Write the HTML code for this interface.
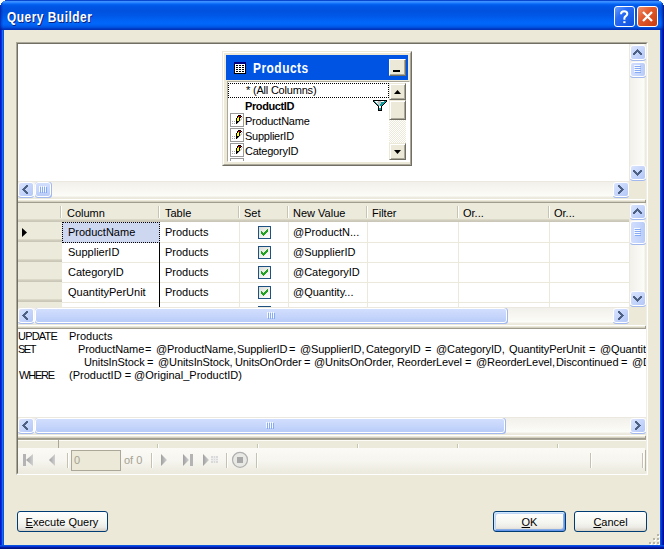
<!DOCTYPE html><html><head><meta charset="utf-8"><style>
*{margin:0;padding:0;box-sizing:border-box}
html,body{width:664px;height:549px;overflow:hidden;background:#fff}
body{position:relative;font-family:"Liberation Sans",sans-serif;font-size:11px;color:#000}
.a{position:absolute}
.t{position:absolute;white-space:pre;font-size:11px;line-height:13px}
.sb,.thv,.thh{position:absolute;border-radius:3px;background:linear-gradient(180deg,transparent 0,transparent calc(100% - 2px),#a3b9ee calc(100% - 2px))}
.thh{background:#a3b9ee}
.sb{width:16px;height:16px}
.sb>svg{position:absolute;left:0;top:0}
.sb::before,.thv::before,.thh::before{content:"";position:absolute;left:0;top:0;right:0;bottom:1px;border:1px solid #fff;border-radius:3px;background:linear-gradient(135deg,#dae4fd 0%,#c8d7fb 45%,#b3c7f7 100%)}
.thh::before{right:1px}
.thv{width:16px}
.thh{height:16px}
.thv::before{background:linear-gradient(90deg,#d2defd,#c4d4fb 60%,#b8ccf8)}
.thh::before{background:linear-gradient(180deg,#d2defd,#c4d4fb 60%,#b8ccf8)}
.sb>svg,.thv>svg,.thh>svg{z-index:1}
.trkv{position:absolute;width:17px;background:linear-gradient(90deg,#ebe9df 0,#ebe9df 1px,#f2f0ea 1px,#fcfcf8 15px,#edebe1 16px,#edebe1 17px)}
.trkh{position:absolute;height:17px;background:linear-gradient(180deg,#ebe9df 0,#ebe9df 1px,#f2f0ea 1px,#fcfcf8 15px,#edebe1 16px,#edebe1 17px)}
.hdr{position:absolute;background:linear-gradient(180deg,#ebeadb 0,#ebeadb calc(100% - 3px),#e2decd calc(100% - 3px),#d6d2c2 calc(100% - 2px),#cbc7b8 calc(100% - 1px))}
.rh{position:absolute;left:18px;width:44px;height:20px;background:linear-gradient(180deg,#ebeadb 0,#ebeadb 17px,#e2decd 17px,#d6d2c2 18px,#cbc7b8 19px)}
.hsep{position:absolute;width:2px;height:12px;border-left:1px solid #c7c5b2;border-right:1px solid #fff}
.chk{position:absolute;width:13px;height:13px;border:1px solid #1c5180;background:linear-gradient(135deg,#dcdcd7,#fff)}
.btn{position:absolute;height:21px;border:1px solid #003c74;border-radius:3px;background:linear-gradient(180deg,#fff 0%,#f4f4ef 60%,#ecebe6 80%,#d6d0c5 100%);text-align:center;line-height:20px}
.tsep{position:absolute;width:2px;height:15px;border-left:1px solid #c5c2b2;border-right:1px solid #fff}
.cls{position:absolute;width:17px;background:#ece9d8;border-top:1px solid #ece9d8;border-left:1px solid #ece9d8;border-right:1px solid #716f64;border-bottom:1px solid #716f64;box-shadow:inset 1px 1px 0 #fff,inset -1px -1px 0 #aca899}
</style></head><body>
<div class="a" style="left:0;top:0;width:664px;height:549px;background:#0831d9;overflow:hidden">
<div class="a" style="left:0;top:0;width:664px;height:30px;background:linear-gradient(180deg,#0a47d0 0px,#0a47d0 1px,#3f8fff 1px,#3a91ff 2px,#1c7bff 3px,#0a68f5 4px,#005ceb 5px,#0055e5 7px,#0051de 11px,#0058e8 16px,#0064f7 21px,#0067fa 24px,#005dee 26px,#0049d6 28px,#0033ba 29px,#0033ba 30px)"></div>
<div class="a" style="left:0px;top:30px;width:1px;height:519px;background:#0019cf"></div>
<div class="a" style="left:1px;top:30px;width:1px;height:519px;background:#0831d9"></div>
<div class="a" style="left:2px;top:30px;width:1px;height:519px;background:#166aee"></div>
<div class="a" style="left:3px;top:30px;width:1px;height:519px;background:#0855dd"></div>
<div class="a" style="left:660px;top:30px;width:1px;height:519px;background:#0855dd"></div>
<div class="a" style="left:661px;top:30px;width:1px;height:519px;background:#0831d9"></div>
<div class="a" style="left:662px;top:30px;width:1px;height:519px;background:#0019cf"></div>
<div class="a" style="left:663px;top:30px;width:1px;height:519px;background:#001080"></div>
<div class="a" style="left:0px;top:545px;width:664px;height:1px;background:#0855dd"></div>
<div class="a" style="left:0px;top:546px;width:664px;height:1px;background:#0831d9"></div>
<div class="a" style="left:0px;top:547px;width:664px;height:1px;background:#001ea0"></div>
<div class="a" style="left:0px;top:548px;width:664px;height:1px;background:#001080"></div>
<div class="a" style="left:4px;top:30px;width:656px;height:515px;background:#ece9d8"></div>
<div class="a" style="left:0px;top:0px;width:1px;height:30px;background:rgba(0,16,140,0.55)"></div>
<div class="a" style="left:1px;top:0px;width:1px;height:30px;background:rgba(0,20,160,0.3)"></div>
<div class="a" style="left:2px;top:0px;width:1px;height:30px;background:rgba(0,20,160,0.12)"></div>
<div class="a" style="left:663px;top:0px;width:1px;height:30px;background:rgba(0,10,100,0.7)"></div>
<div class="a" style="left:662px;top:0px;width:1px;height:30px;background:rgba(0,20,150,0.45)"></div>
<div class="a" style="left:661px;top:0px;width:1px;height:30px;background:rgba(0,30,180,0.2)"></div>
<div class="a" style="left:0px;top:0px;width:5px;height:1px;background:#fff"></div>
<div class="a" style="left:659px;top:0px;width:5px;height:1px;background:#fff"></div>
<div class="a" style="left:0px;top:1px;width:3px;height:1px;background:#fff"></div>
<div class="a" style="left:661px;top:1px;width:3px;height:1px;background:#fff"></div>
<div class="a" style="left:0px;top:2px;width:2px;height:1px;background:#fff"></div>
<div class="a" style="left:662px;top:2px;width:2px;height:1px;background:#fff"></div>
<div class="a" style="left:0px;top:3px;width:1px;height:1px;background:#fff"></div>
<div class="a" style="left:663px;top:3px;width:1px;height:1px;background:#fff"></div>
<div class="a" style="left:0px;top:4px;width:1px;height:1px;background:#fff"></div>
<div class="a" style="left:663px;top:4px;width:1px;height:1px;background:#fff"></div>
</div>
<div class="t" style="left:7px;top:9px;font-size:14px;line-height:16px;font-weight:bold;color:#fff;text-shadow:1px 1px 0 #0a1e7a;letter-spacing:0.6px;transform:scaleX(0.85);transform-origin:0 0">Query Builder</div>
<div class="a" style="left:614px;top:6px;width:21px;height:21px;border:1px solid #fff;border-radius:3px;background:linear-gradient(135deg,#6aa0ff 0%,#2a6cf5 35%,#0b4fdd 100%)"><svg class="a" style="left:0;top:0" width="19" height="19" viewBox="0 0 19 19"><path d="M6 7.2 C6 4.9 7.6 4.3 9.2 4.3 C11 4.3 12.3 5.3 12.3 7 C12.3 8.8 9.4 9.4 9.4 11 L9.4 12.8" fill="none" stroke="#fff" stroke-width="2"/><rect x="8.3" y="14.2" width="2.2" height="1.9" fill="#fff"/></svg></div>
<div class="a" style="left:637px;top:6px;width:21px;height:21px;border:1px solid #fff;border-radius:3px;background:linear-gradient(135deg,#f0906a 0%,#e25a2c 40%,#c83c10 100%)"><svg class="a" style="left:0;top:0" width="19" height="19" viewBox="0 0 19 19"><path d="M5 5 L14 14 M14 5 L5 14" stroke="#fff" stroke-width="2.3"/></svg></div>
<div class="a" style="left:16px;top:42px;width:632px;height:433px;background:#ece9d8;border-top:1px solid #aca899;border-left:1px solid #aca899;border-right:1px solid #fff;border-bottom:1px solid #fff"></div>
<div class="a" style="left:17px;top:43px;width:630px;height:431px;border-top:1px solid #716f64;border-left:1px solid #716f64;border-right:1px solid #f1efe2;border-bottom:1px solid #f1efe2"></div>
<div class="a" style="left:18px;top:44px;width:611px;height:137px;background:#fff"></div>
<div class="trkv" style="left:629px;top:44px;height:137px"></div>
<div class="sb" style="left:630px;top:45px"></div>
<svg class="a" style="left:630px;top:45px" width="12" height="10" shape-rendering="crispEdges"><rect x="7" y="4" width="1" height="1" fill="#4d6185"/><rect x="6" y="5" width="3" height="1" fill="#4d6185"/><rect x="5" y="6" width="5" height="1" fill="#4d6185"/><rect x="4" y="7" width="3" height="1" fill="#4d6185"/><rect x="8" y="7" width="3" height="1" fill="#4d6185"/><rect x="3" y="8" width="3" height="1" fill="#4d6185"/><rect x="9" y="8" width="3" height="1" fill="#4d6185"/><rect x="3" y="9" width="2" height="1" fill="#4d6185"/><rect x="10" y="9" width="2" height="1" fill="#4d6185"/></svg>
<div class="thv" style="left:630px;top:62px;height:16px"></div>
<svg class="a" style="left:630px;top:62px" width="11" height="11" shape-rendering="crispEdges"><rect x="4" y="3" width="6" height="1" fill="#f6f9fe"/><rect x="5" y="4" width="6" height="1" fill="#86aaf6"/><rect x="4" y="5" width="6" height="1" fill="#f6f9fe"/><rect x="5" y="6" width="6" height="1" fill="#86aaf6"/><rect x="4" y="7" width="6" height="1" fill="#f6f9fe"/><rect x="5" y="8" width="6" height="1" fill="#86aaf6"/><rect x="4" y="9" width="6" height="1" fill="#f6f9fe"/><rect x="5" y="10" width="6" height="1" fill="#86aaf6"/></svg>
<div class="sb" style="left:630px;top:165px"></div>
<svg class="a" style="left:630px;top:165px" width="12" height="11" shape-rendering="crispEdges"><rect x="3" y="5" width="2" height="1" fill="#4d6185"/><rect x="10" y="5" width="2" height="1" fill="#4d6185"/><rect x="3" y="6" width="3" height="1" fill="#4d6185"/><rect x="9" y="6" width="3" height="1" fill="#4d6185"/><rect x="4" y="7" width="3" height="1" fill="#4d6185"/><rect x="8" y="7" width="3" height="1" fill="#4d6185"/><rect x="5" y="8" width="5" height="1" fill="#4d6185"/><rect x="6" y="9" width="3" height="1" fill="#4d6185"/><rect x="7" y="10" width="1" height="1" fill="#4d6185"/></svg>
<div class="trkh" style="left:18px;top:181px;width:611px"></div>
<div class="sb" style="left:18px;top:182px"></div>
<svg class="a" style="left:18px;top:182px" width="10" height="12" shape-rendering="crispEdges"><rect x="8" y="3" width="2" height="1" fill="#4d6185"/><rect x="7" y="4" width="3" height="1" fill="#4d6185"/><rect x="6" y="5" width="3" height="1" fill="#4d6185"/><rect x="5" y="6" width="3" height="1" fill="#4d6185"/><rect x="4" y="7" width="3" height="1" fill="#4d6185"/><rect x="5" y="8" width="3" height="1" fill="#4d6185"/><rect x="6" y="9" width="3" height="1" fill="#4d6185"/><rect x="7" y="10" width="3" height="1" fill="#4d6185"/><rect x="8" y="11" width="2" height="1" fill="#4d6185"/></svg>
<div class="thh" style="left:35px;top:182px;width:17px"></div>
<svg class="a" style="left:35px;top:182px" width="12" height="11" shape-rendering="crispEdges"><rect x="4" y="4" width="1" height="1" fill="#f6f9fe"/><rect x="6" y="4" width="1" height="1" fill="#f6f9fe"/><rect x="8" y="4" width="1" height="1" fill="#f6f9fe"/><rect x="10" y="4" width="1" height="1" fill="#f6f9fe"/><rect x="4" y="5" width="1" height="1" fill="#f6f9fe"/><rect x="5" y="5" width="1" height="1" fill="#86aaf6"/><rect x="6" y="5" width="1" height="1" fill="#f6f9fe"/><rect x="7" y="5" width="1" height="1" fill="#86aaf6"/><rect x="8" y="5" width="1" height="1" fill="#f6f9fe"/><rect x="9" y="5" width="1" height="1" fill="#86aaf6"/><rect x="10" y="5" width="1" height="1" fill="#f6f9fe"/><rect x="11" y="5" width="1" height="1" fill="#86aaf6"/><rect x="4" y="6" width="1" height="1" fill="#f6f9fe"/><rect x="5" y="6" width="1" height="1" fill="#86aaf6"/><rect x="6" y="6" width="1" height="1" fill="#f6f9fe"/><rect x="7" y="6" width="1" height="1" fill="#86aaf6"/><rect x="8" y="6" width="1" height="1" fill="#f6f9fe"/><rect x="9" y="6" width="1" height="1" fill="#86aaf6"/><rect x="10" y="6" width="1" height="1" fill="#f6f9fe"/><rect x="11" y="6" width="1" height="1" fill="#86aaf6"/><rect x="4" y="7" width="1" height="1" fill="#f6f9fe"/><rect x="5" y="7" width="1" height="1" fill="#86aaf6"/><rect x="6" y="7" width="1" height="1" fill="#f6f9fe"/><rect x="7" y="7" width="1" height="1" fill="#86aaf6"/><rect x="8" y="7" width="1" height="1" fill="#f6f9fe"/><rect x="9" y="7" width="1" height="1" fill="#86aaf6"/><rect x="10" y="7" width="1" height="1" fill="#f6f9fe"/><rect x="11" y="7" width="1" height="1" fill="#86aaf6"/><rect x="4" y="8" width="1" height="1" fill="#f6f9fe"/><rect x="5" y="8" width="1" height="1" fill="#86aaf6"/><rect x="6" y="8" width="1" height="1" fill="#f6f9fe"/><rect x="7" y="8" width="1" height="1" fill="#86aaf6"/><rect x="8" y="8" width="1" height="1" fill="#f6f9fe"/><rect x="9" y="8" width="1" height="1" fill="#86aaf6"/><rect x="10" y="8" width="1" height="1" fill="#f6f9fe"/><rect x="11" y="8" width="1" height="1" fill="#86aaf6"/><rect x="4" y="9" width="1" height="1" fill="#f6f9fe"/><rect x="5" y="9" width="1" height="1" fill="#86aaf6"/><rect x="6" y="9" width="1" height="1" fill="#f6f9fe"/><rect x="7" y="9" width="1" height="1" fill="#86aaf6"/><rect x="8" y="9" width="1" height="1" fill="#f6f9fe"/><rect x="9" y="9" width="1" height="1" fill="#86aaf6"/><rect x="10" y="9" width="1" height="1" fill="#f6f9fe"/><rect x="11" y="9" width="1" height="1" fill="#86aaf6"/><rect x="5" y="10" width="1" height="1" fill="#86aaf6"/><rect x="7" y="10" width="1" height="1" fill="#86aaf6"/><rect x="9" y="10" width="1" height="1" fill="#86aaf6"/><rect x="11" y="10" width="1" height="1" fill="#86aaf6"/></svg>
<div class="sb" style="left:613px;top:182px"></div>
<svg class="a" style="left:613px;top:182px" width="11" height="12" shape-rendering="crispEdges"><rect x="5" y="3" width="2" height="1" fill="#4d6185"/><rect x="5" y="4" width="3" height="1" fill="#4d6185"/><rect x="6" y="5" width="3" height="1" fill="#4d6185"/><rect x="7" y="6" width="3" height="1" fill="#4d6185"/><rect x="8" y="7" width="3" height="1" fill="#4d6185"/><rect x="7" y="8" width="3" height="1" fill="#4d6185"/><rect x="6" y="9" width="3" height="1" fill="#4d6185"/><rect x="5" y="10" width="3" height="1" fill="#4d6185"/><rect x="5" y="11" width="2" height="1" fill="#4d6185"/></svg>
<div class="a" style="left:222px;top:51px;width:190px;height:115px;background:#ece9d8;border-top:1px solid #ece9d8;border-left:1px solid #ece9d8;border-right:1px solid #716f64;border-bottom:1px solid #716f64"></div>
<div class="a" style="left:223px;top:52px;width:188px;height:113px;border-top:1px solid #fff;border-left:1px solid #fff;border-right:1px solid #aca899;border-bottom:1px solid #aca899"></div>
<div class="a" style="left:226px;top:55px;width:182px;height:25px;background:#0054e3"></div>
<svg class="a" style="left:234px;top:62px" width="12" height="12" shape-rendering="crispEdges"><rect x="0" y="0" width="12" height="1" fill="#000080"/><rect x="0" y="1" width="12" height="1" fill="#000080"/><rect x="0" y="2" width="1" height="1" fill="#000"/><rect x="1" y="2" width="10" height="1" fill="#fff"/><rect x="11" y="2" width="1" height="1" fill="#000"/><rect x="0" y="3" width="1" height="1" fill="#000"/><rect x="1" y="3" width="1" height="1" fill="#fff"/><rect x="2" y="3" width="2" height="1" fill="#000"/><rect x="4" y="3" width="1" height="1" fill="#fff"/><rect x="5" y="3" width="2" height="1" fill="#000"/><rect x="7" y="3" width="1" height="1" fill="#fff"/><rect x="8" y="3" width="2" height="1" fill="#000"/><rect x="10" y="3" width="1" height="1" fill="#fff"/><rect x="11" y="3" width="1" height="1" fill="#000"/><rect x="0" y="4" width="1" height="1" fill="#000"/><rect x="1" y="4" width="10" height="1" fill="#fff"/><rect x="11" y="4" width="1" height="1" fill="#000"/><rect x="0" y="5" width="1" height="1" fill="#000"/><rect x="1" y="5" width="1" height="1" fill="#fff"/><rect x="2" y="5" width="2" height="1" fill="#000"/><rect x="4" y="5" width="1" height="1" fill="#fff"/><rect x="5" y="5" width="2" height="1" fill="#000"/><rect x="7" y="5" width="1" height="1" fill="#fff"/><rect x="8" y="5" width="2" height="1" fill="#000"/><rect x="10" y="5" width="1" height="1" fill="#fff"/><rect x="11" y="5" width="1" height="1" fill="#000"/><rect x="0" y="6" width="1" height="1" fill="#000"/><rect x="1" y="6" width="10" height="1" fill="#fff"/><rect x="11" y="6" width="1" height="1" fill="#000"/><rect x="0" y="7" width="1" height="1" fill="#000"/><rect x="1" y="7" width="1" height="1" fill="#fff"/><rect x="2" y="7" width="2" height="1" fill="#000"/><rect x="4" y="7" width="1" height="1" fill="#fff"/><rect x="5" y="7" width="2" height="1" fill="#000"/><rect x="7" y="7" width="1" height="1" fill="#fff"/><rect x="8" y="7" width="2" height="1" fill="#000"/><rect x="10" y="7" width="1" height="1" fill="#fff"/><rect x="11" y="7" width="1" height="1" fill="#000"/><rect x="0" y="8" width="1" height="1" fill="#000"/><rect x="1" y="8" width="10" height="1" fill="#fff"/><rect x="11" y="8" width="1" height="1" fill="#000"/><rect x="0" y="9" width="1" height="1" fill="#000"/><rect x="1" y="9" width="1" height="1" fill="#fff"/><rect x="2" y="9" width="2" height="1" fill="#000"/><rect x="4" y="9" width="1" height="1" fill="#fff"/><rect x="5" y="9" width="2" height="1" fill="#000"/><rect x="7" y="9" width="1" height="1" fill="#fff"/><rect x="8" y="9" width="2" height="1" fill="#000"/><rect x="10" y="9" width="1" height="1" fill="#fff"/><rect x="11" y="9" width="1" height="1" fill="#000"/><rect x="0" y="10" width="1" height="1" fill="#000"/><rect x="1" y="10" width="10" height="1" fill="#fff"/><rect x="11" y="10" width="1" height="1" fill="#000"/><rect x="0" y="11" width="12" height="1" fill="#000"/></svg>
<div class="t" style="left:253px;top:60px;font-size:14px;line-height:16px;font-weight:bold;color:#fff;letter-spacing:0.6px;transform:scaleX(0.85);transform-origin:0 0">Products</div>
<div class="a" style="left:389px;top:59px;width:17px;height:17px;background:#ece9d8;border-top:1px solid #fff;border-left:1px solid #fff;border-right:1px solid #716f64;border-bottom:1px solid #716f64;box-shadow:inset -1px -1px 0 #aca899"></div>
<div class="a" style="left:393px;top:70px;width:7px;height:2px;background:#000"></div>
<div class="a" style="left:227px;top:81px;width:183px;height:81px;background:#fff;border-top:1px solid #aca899;border-left:1px solid #aca899;border-right:1px solid #fff;border-bottom:1px solid #fff"></div>
<div class="a" style="left:228px;top:83px;width:161px;height:15px;border:1px dotted #000"></div>
<div class="t" style="left:246px;top:84px;letter-spacing:-0.2px">* (All Columns)</div>
<div class="t" style="left:245px;top:100px;font-weight:bold;letter-spacing:-0.4px">ProductID</div>
<svg class="a" style="left:373px;top:100px" width="14" height="11" shape-rendering="crispEdges"><rect x="0" y="0" width="14" height="1" fill="#000"/><rect x="0" y="1" width="1" height="1" fill="#000"/><rect x="1" y="1" width="1" height="1" fill="#0a9d9d"/><rect x="2" y="1" width="3" height="1" fill="#ffffff"/><rect x="5" y="1" width="3" height="1" fill="#c4c4c4"/><rect x="8" y="1" width="3" height="1" fill="#ffffff"/><rect x="11" y="1" width="2" height="1" fill="#0a9d9d"/><rect x="13" y="1" width="1" height="1" fill="#000"/><rect x="1" y="2" width="1" height="1" fill="#000"/><rect x="2" y="2" width="1" height="1" fill="#0a9d9d"/><rect x="3" y="2" width="1" height="1" fill="#ffffff"/><rect x="4" y="2" width="4" height="1" fill="#c4c4c4"/><rect x="8" y="2" width="4" height="1" fill="#0a9d9d"/><rect x="12" y="2" width="1" height="1" fill="#000"/><rect x="2" y="3" width="1" height="1" fill="#000"/><rect x="3" y="3" width="1" height="1" fill="#0a9d9d"/><rect x="4" y="3" width="1" height="1" fill="#ffffff"/><rect x="5" y="3" width="3" height="1" fill="#c4c4c4"/><rect x="8" y="3" width="3" height="1" fill="#0a9d9d"/><rect x="11" y="3" width="1" height="1" fill="#000"/><rect x="3" y="4" width="1" height="1" fill="#000"/><rect x="4" y="4" width="1" height="1" fill="#0a9d9d"/><rect x="5" y="4" width="2" height="1" fill="#c4c4c4"/><rect x="7" y="4" width="3" height="1" fill="#0a9d9d"/><rect x="10" y="4" width="1" height="1" fill="#000"/><rect x="4" y="5" width="1" height="1" fill="#000"/><rect x="5" y="5" width="1" height="1" fill="#0a9d9d"/><rect x="6" y="5" width="1" height="1" fill="#c4c4c4"/><rect x="7" y="5" width="2" height="1" fill="#0a9d9d"/><rect x="9" y="5" width="1" height="1" fill="#000"/><rect x="5" y="6" width="1" height="1" fill="#000"/><rect x="6" y="6" width="2" height="1" fill="#ffffff"/><rect x="8" y="6" width="1" height="1" fill="#000"/><rect x="5" y="7" width="1" height="1" fill="#000"/><rect x="6" y="7" width="2" height="1" fill="#ffffff"/><rect x="8" y="7" width="1" height="1" fill="#000"/><rect x="5" y="8" width="1" height="1" fill="#000"/><rect x="6" y="8" width="2" height="1" fill="#0a9d9d"/><rect x="8" y="8" width="1" height="1" fill="#000"/><rect x="5" y="9" width="1" height="1" fill="#000"/><rect x="6" y="9" width="2" height="1" fill="#0a9d9d"/><rect x="8" y="9" width="1" height="1" fill="#000"/><rect x="5" y="10" width="4" height="1" fill="#000"/></svg>
<div class="t" style="left:245px;top:115px;letter-spacing:-0.25px">ProductName</div>
<svg class="a" style="left:230px;top:113px" width="14" height="14" shape-rendering="crispEdges"><rect x="0" y="0" width="14" height="1" fill="#999999"/><rect x="0" y="1" width="1" height="1" fill="#999999"/><rect x="13" y="1" width="1" height="1" fill="#999999"/><rect x="0" y="2" width="1" height="1" fill="#999999"/><rect x="8" y="2" width="3" height="1" fill="#000"/><rect x="13" y="2" width="1" height="1" fill="#999999"/><rect x="0" y="3" width="1" height="1" fill="#999999"/><rect x="7" y="3" width="1" height="1" fill="#000"/><rect x="8" y="3" width="3" height="1" fill="#b00000"/><rect x="11" y="3" width="1" height="1" fill="#000"/><rect x="13" y="3" width="1" height="1" fill="#999999"/><rect x="0" y="4" width="1" height="1" fill="#999999"/><rect x="7" y="4" width="1" height="1" fill="#000"/><rect x="8" y="4" width="1" height="1" fill="#ffff00"/><rect x="9" y="4" width="2" height="1" fill="#000"/><rect x="12" y="4" width="1" height="1" fill="#cfcfcf"/><rect x="13" y="4" width="1" height="1" fill="#999999"/><rect x="0" y="5" width="1" height="1" fill="#999999"/><rect x="6" y="5" width="1" height="1" fill="#000"/><rect x="7" y="5" width="2" height="1" fill="#ffff00"/><rect x="9" y="5" width="1" height="1" fill="#000"/><rect x="11" y="5" width="1" height="1" fill="#cfcfcf"/><rect x="13" y="5" width="1" height="1" fill="#999999"/><rect x="0" y="6" width="1" height="1" fill="#999999"/><rect x="6" y="6" width="1" height="1" fill="#000"/><rect x="7" y="6" width="2" height="1" fill="#ffff00"/><rect x="9" y="6" width="1" height="1" fill="#000"/><rect x="10" y="6" width="2" height="1" fill="#cfcfcf"/><rect x="13" y="6" width="1" height="1" fill="#999999"/><rect x="0" y="7" width="1" height="1" fill="#999999"/><rect x="6" y="7" width="1" height="1" fill="#000"/><rect x="7" y="7" width="2" height="1" fill="#ffff00"/><rect x="9" y="7" width="1" height="1" fill="#000"/><rect x="10" y="7" width="1" height="1" fill="#cfcfcf"/><rect x="13" y="7" width="1" height="1" fill="#999999"/><rect x="0" y="8" width="1" height="1" fill="#999999"/><rect x="2" y="8" width="1" height="1" fill="#a8a8a8"/><rect x="4" y="8" width="1" height="1" fill="#a8a8a8"/><rect x="6" y="8" width="3" height="1" fill="#000"/><rect x="9" y="8" width="1" height="1" fill="#cfcfcf"/><rect x="13" y="8" width="1" height="1" fill="#999999"/><rect x="0" y="9" width="1" height="1" fill="#999999"/><rect x="6" y="9" width="2" height="1" fill="#000"/><rect x="8" y="9" width="1" height="1" fill="#cfcfcf"/><rect x="13" y="9" width="1" height="1" fill="#999999"/><rect x="0" y="10" width="1" height="1" fill="#999999"/><rect x="2" y="10" width="1" height="1" fill="#a8a8a8"/><rect x="4" y="10" width="1" height="1" fill="#a8a8a8"/><rect x="6" y="10" width="1" height="1" fill="#000"/><rect x="7" y="10" width="1" height="1" fill="#cfcfcf"/><rect x="13" y="10" width="1" height="1" fill="#999999"/><rect x="0" y="11" width="1" height="1" fill="#999999"/><rect x="13" y="11" width="1" height="1" fill="#999999"/><rect x="0" y="12" width="1" height="1" fill="#999999"/><rect x="13" y="12" width="1" height="1" fill="#999999"/><rect x="0" y="13" width="14" height="1" fill="#999999"/></svg>
<div class="t" style="left:245px;top:130px;letter-spacing:-0.25px">SupplierID</div>
<svg class="a" style="left:230px;top:128px" width="14" height="14" shape-rendering="crispEdges"><rect x="0" y="0" width="14" height="1" fill="#999999"/><rect x="0" y="1" width="1" height="1" fill="#999999"/><rect x="13" y="1" width="1" height="1" fill="#999999"/><rect x="0" y="2" width="1" height="1" fill="#999999"/><rect x="8" y="2" width="3" height="1" fill="#000"/><rect x="13" y="2" width="1" height="1" fill="#999999"/><rect x="0" y="3" width="1" height="1" fill="#999999"/><rect x="7" y="3" width="1" height="1" fill="#000"/><rect x="8" y="3" width="3" height="1" fill="#b00000"/><rect x="11" y="3" width="1" height="1" fill="#000"/><rect x="13" y="3" width="1" height="1" fill="#999999"/><rect x="0" y="4" width="1" height="1" fill="#999999"/><rect x="7" y="4" width="1" height="1" fill="#000"/><rect x="8" y="4" width="1" height="1" fill="#ffff00"/><rect x="9" y="4" width="2" height="1" fill="#000"/><rect x="12" y="4" width="1" height="1" fill="#cfcfcf"/><rect x="13" y="4" width="1" height="1" fill="#999999"/><rect x="0" y="5" width="1" height="1" fill="#999999"/><rect x="6" y="5" width="1" height="1" fill="#000"/><rect x="7" y="5" width="2" height="1" fill="#ffff00"/><rect x="9" y="5" width="1" height="1" fill="#000"/><rect x="11" y="5" width="1" height="1" fill="#cfcfcf"/><rect x="13" y="5" width="1" height="1" fill="#999999"/><rect x="0" y="6" width="1" height="1" fill="#999999"/><rect x="6" y="6" width="1" height="1" fill="#000"/><rect x="7" y="6" width="2" height="1" fill="#ffff00"/><rect x="9" y="6" width="1" height="1" fill="#000"/><rect x="10" y="6" width="2" height="1" fill="#cfcfcf"/><rect x="13" y="6" width="1" height="1" fill="#999999"/><rect x="0" y="7" width="1" height="1" fill="#999999"/><rect x="6" y="7" width="1" height="1" fill="#000"/><rect x="7" y="7" width="2" height="1" fill="#ffff00"/><rect x="9" y="7" width="1" height="1" fill="#000"/><rect x="10" y="7" width="1" height="1" fill="#cfcfcf"/><rect x="13" y="7" width="1" height="1" fill="#999999"/><rect x="0" y="8" width="1" height="1" fill="#999999"/><rect x="2" y="8" width="1" height="1" fill="#a8a8a8"/><rect x="4" y="8" width="1" height="1" fill="#a8a8a8"/><rect x="6" y="8" width="3" height="1" fill="#000"/><rect x="9" y="8" width="1" height="1" fill="#cfcfcf"/><rect x="13" y="8" width="1" height="1" fill="#999999"/><rect x="0" y="9" width="1" height="1" fill="#999999"/><rect x="6" y="9" width="2" height="1" fill="#000"/><rect x="8" y="9" width="1" height="1" fill="#cfcfcf"/><rect x="13" y="9" width="1" height="1" fill="#999999"/><rect x="0" y="10" width="1" height="1" fill="#999999"/><rect x="2" y="10" width="1" height="1" fill="#a8a8a8"/><rect x="4" y="10" width="1" height="1" fill="#a8a8a8"/><rect x="6" y="10" width="1" height="1" fill="#000"/><rect x="7" y="10" width="1" height="1" fill="#cfcfcf"/><rect x="13" y="10" width="1" height="1" fill="#999999"/><rect x="0" y="11" width="1" height="1" fill="#999999"/><rect x="13" y="11" width="1" height="1" fill="#999999"/><rect x="0" y="12" width="1" height="1" fill="#999999"/><rect x="13" y="12" width="1" height="1" fill="#999999"/><rect x="0" y="13" width="14" height="1" fill="#999999"/></svg>
<div class="t" style="left:245px;top:145px;letter-spacing:-0.25px">CategoryID</div>
<svg class="a" style="left:230px;top:143px" width="14" height="14" shape-rendering="crispEdges"><rect x="0" y="0" width="14" height="1" fill="#999999"/><rect x="0" y="1" width="1" height="1" fill="#999999"/><rect x="13" y="1" width="1" height="1" fill="#999999"/><rect x="0" y="2" width="1" height="1" fill="#999999"/><rect x="8" y="2" width="3" height="1" fill="#000"/><rect x="13" y="2" width="1" height="1" fill="#999999"/><rect x="0" y="3" width="1" height="1" fill="#999999"/><rect x="7" y="3" width="1" height="1" fill="#000"/><rect x="8" y="3" width="3" height="1" fill="#b00000"/><rect x="11" y="3" width="1" height="1" fill="#000"/><rect x="13" y="3" width="1" height="1" fill="#999999"/><rect x="0" y="4" width="1" height="1" fill="#999999"/><rect x="7" y="4" width="1" height="1" fill="#000"/><rect x="8" y="4" width="1" height="1" fill="#ffff00"/><rect x="9" y="4" width="2" height="1" fill="#000"/><rect x="12" y="4" width="1" height="1" fill="#cfcfcf"/><rect x="13" y="4" width="1" height="1" fill="#999999"/><rect x="0" y="5" width="1" height="1" fill="#999999"/><rect x="6" y="5" width="1" height="1" fill="#000"/><rect x="7" y="5" width="2" height="1" fill="#ffff00"/><rect x="9" y="5" width="1" height="1" fill="#000"/><rect x="11" y="5" width="1" height="1" fill="#cfcfcf"/><rect x="13" y="5" width="1" height="1" fill="#999999"/><rect x="0" y="6" width="1" height="1" fill="#999999"/><rect x="6" y="6" width="1" height="1" fill="#000"/><rect x="7" y="6" width="2" height="1" fill="#ffff00"/><rect x="9" y="6" width="1" height="1" fill="#000"/><rect x="10" y="6" width="2" height="1" fill="#cfcfcf"/><rect x="13" y="6" width="1" height="1" fill="#999999"/><rect x="0" y="7" width="1" height="1" fill="#999999"/><rect x="6" y="7" width="1" height="1" fill="#000"/><rect x="7" y="7" width="2" height="1" fill="#ffff00"/><rect x="9" y="7" width="1" height="1" fill="#000"/><rect x="10" y="7" width="1" height="1" fill="#cfcfcf"/><rect x="13" y="7" width="1" height="1" fill="#999999"/><rect x="0" y="8" width="1" height="1" fill="#999999"/><rect x="2" y="8" width="1" height="1" fill="#a8a8a8"/><rect x="4" y="8" width="1" height="1" fill="#a8a8a8"/><rect x="6" y="8" width="3" height="1" fill="#000"/><rect x="9" y="8" width="1" height="1" fill="#cfcfcf"/><rect x="13" y="8" width="1" height="1" fill="#999999"/><rect x="0" y="9" width="1" height="1" fill="#999999"/><rect x="6" y="9" width="2" height="1" fill="#000"/><rect x="8" y="9" width="1" height="1" fill="#cfcfcf"/><rect x="13" y="9" width="1" height="1" fill="#999999"/><rect x="0" y="10" width="1" height="1" fill="#999999"/><rect x="2" y="10" width="1" height="1" fill="#a8a8a8"/><rect x="4" y="10" width="1" height="1" fill="#a8a8a8"/><rect x="6" y="10" width="1" height="1" fill="#000"/><rect x="7" y="10" width="1" height="1" fill="#cfcfcf"/><rect x="13" y="10" width="1" height="1" fill="#999999"/><rect x="0" y="11" width="1" height="1" fill="#999999"/><rect x="13" y="11" width="1" height="1" fill="#999999"/><rect x="0" y="12" width="1" height="1" fill="#999999"/><rect x="13" y="12" width="1" height="1" fill="#999999"/><rect x="0" y="13" width="14" height="1" fill="#999999"/></svg>
<div class="a" style="left:230px;top:158px;width:14px;height:3px;border:1px solid #999;border-bottom:none"></div>
<div class="a" style="left:389px;top:83px;width:17px;height:77px;background-color:#f5f4ef;background-image:repeating-conic-gradient(#ece9d8 0 25%,#fff 0 50%);background-size:2px 2px"></div>
<div class="cls" style="left:389px;top:83px;height:17px"></div>
<svg class="a" style="left:389px;top:83px" width="17" height="17"><path d="M5 11h7l-3.5-4z" fill="#000"/></svg>
<div class="cls" style="left:389px;top:100px;height:20px"></div>
<div class="cls" style="left:389px;top:143px;height:17px"></div>
<svg class="a" style="left:389px;top:143px" width="17" height="17"><path d="M5 7h7l-3.5 4z" fill="#000"/></svg>
<div class="a" style="left:18px;top:198px;width:628px;height:1px;background:#ebe9da"></div>
<div class="a" style="left:18px;top:199px;width:627px;height:1px;background:#fff"></div>
<div class="a" style="left:18px;top:201px;width:628px;height:1px;background:#d4d0c2"></div>
<div class="a" style="left:18px;top:202px;width:628px;height:1px;background:#a09d8e"></div>
<div class="a" style="left:645px;top:200px;width:1px;height:3px;background:#a09d8e"></div>
<div class="a" style="left:18px;top:203px;width:611px;height:105px;background:#fff"></div>
<div class="hdr" style="left:18px;top:203px;width:611px;height:19px"></div>
<div class="hsep" style="left:60px;top:206px"></div>
<div class="hsep" style="left:158px;top:206px"></div>
<div class="hsep" style="left:238px;top:206px"></div>
<div class="hsep" style="left:287px;top:206px"></div>
<div class="hsep" style="left:366px;top:206px"></div>
<div class="hsep" style="left:457px;top:206px"></div>
<div class="hsep" style="left:548px;top:206px"></div>
<div class="t" style="left:67px;top:207px;">Column</div>
<div class="t" style="left:165px;top:207px;">Table</div>
<div class="t" style="left:244px;top:207px;">Set</div>
<div class="t" style="left:293px;top:207px;">New Value</div>
<div class="t" style="left:372px;top:207px;">Filter</div>
<div class="t" style="left:463px;top:207px;">Or...</div>
<div class="t" style="left:554px;top:207px;">Or...</div>
<div class="rh" style="top:222px"></div>
<div class="rh" style="top:242px"></div>
<div class="rh" style="top:262px"></div>
<div class="rh" style="top:282px"></div>
<div class="a" style="left:18px;top:302px;width:44px;height:6px;background:#ebeadb"></div>
<svg class="a" style="left:22px;top:228px" width="6" height="10"><path d="M0 0v9l5-4.5z" fill="#000"/></svg>
<div class="a" style="left:62px;top:242px;width:567px;height:1px;background:#ebe9dc"></div>
<div class="a" style="left:62px;top:262px;width:567px;height:1px;background:#ebe9dc"></div>
<div class="a" style="left:62px;top:282px;width:567px;height:1px;background:#ebe9dc"></div>
<div class="a" style="left:62px;top:302px;width:567px;height:1px;background:#ebe9dc"></div>
<div class="a" style="left:239px;top:222px;width:1px;height:86px;background:#ebe9dc"></div>
<div class="a" style="left:288px;top:222px;width:1px;height:86px;background:#ebe9dc"></div>
<div class="a" style="left:367px;top:222px;width:1px;height:86px;background:#ebe9dc"></div>
<div class="a" style="left:458px;top:222px;width:1px;height:86px;background:#ebe9dc"></div>
<div class="a" style="left:549px;top:222px;width:1px;height:86px;background:#ebe9dc"></div>
<div class="a" style="left:159px;top:222px;width:1px;height:86px;background:#000"></div>
<div class="a" style="left:62px;top:222px;width:98px;height:21px;background:#cdd7f0;border:1px dotted #000"></div>
<div class="t" style="left:68px;top:226px;">ProductName</div>
<div class="t" style="left:165px;top:226px;">Products</div>
<div class="t" style="left:293px;top:226px;">@ProductN...</div>
<div class="chk" style="left:258px;top:226px"></div>
<svg class="a" style="left:261px;top:229px" width="7" height="7" shape-rendering="crispEdges"><rect x="6" y="0" width="1" height="1" fill="#21a121"/><rect x="5" y="1" width="2" height="1" fill="#21a121"/><rect x="0" y="2" width="1" height="1" fill="#21a121"/><rect x="4" y="2" width="3" height="1" fill="#21a121"/><rect x="0" y="3" width="2" height="1" fill="#21a121"/><rect x="3" y="3" width="3" height="1" fill="#21a121"/><rect x="0" y="4" width="5" height="1" fill="#21a121"/><rect x="1" y="5" width="3" height="1" fill="#21a121"/><rect x="2" y="6" width="1" height="1" fill="#21a121"/></svg>
<div class="t" style="left:68px;top:246px;">SupplierID</div>
<div class="t" style="left:165px;top:246px;">Products</div>
<div class="t" style="left:293px;top:246px;">@SupplierID</div>
<div class="chk" style="left:258px;top:246px"></div>
<svg class="a" style="left:261px;top:249px" width="7" height="7" shape-rendering="crispEdges"><rect x="6" y="0" width="1" height="1" fill="#21a121"/><rect x="5" y="1" width="2" height="1" fill="#21a121"/><rect x="0" y="2" width="1" height="1" fill="#21a121"/><rect x="4" y="2" width="3" height="1" fill="#21a121"/><rect x="0" y="3" width="2" height="1" fill="#21a121"/><rect x="3" y="3" width="3" height="1" fill="#21a121"/><rect x="0" y="4" width="5" height="1" fill="#21a121"/><rect x="1" y="5" width="3" height="1" fill="#21a121"/><rect x="2" y="6" width="1" height="1" fill="#21a121"/></svg>
<div class="t" style="left:68px;top:266px;">CategoryID</div>
<div class="t" style="left:165px;top:266px;">Products</div>
<div class="t" style="left:293px;top:266px;">@CategoryID</div>
<div class="chk" style="left:258px;top:266px"></div>
<svg class="a" style="left:261px;top:269px" width="7" height="7" shape-rendering="crispEdges"><rect x="6" y="0" width="1" height="1" fill="#21a121"/><rect x="5" y="1" width="2" height="1" fill="#21a121"/><rect x="0" y="2" width="1" height="1" fill="#21a121"/><rect x="4" y="2" width="3" height="1" fill="#21a121"/><rect x="0" y="3" width="2" height="1" fill="#21a121"/><rect x="3" y="3" width="3" height="1" fill="#21a121"/><rect x="0" y="4" width="5" height="1" fill="#21a121"/><rect x="1" y="5" width="3" height="1" fill="#21a121"/><rect x="2" y="6" width="1" height="1" fill="#21a121"/></svg>
<div class="t" style="left:68px;top:286px;">QuantityPerUnit</div>
<div class="t" style="left:165px;top:286px;">Products</div>
<div class="t" style="left:293px;top:286px;">@Quantity...</div>
<div class="chk" style="left:258px;top:286px"></div>
<svg class="a" style="left:261px;top:289px" width="7" height="7" shape-rendering="crispEdges"><rect x="6" y="0" width="1" height="1" fill="#21a121"/><rect x="5" y="1" width="2" height="1" fill="#21a121"/><rect x="0" y="2" width="1" height="1" fill="#21a121"/><rect x="4" y="2" width="3" height="1" fill="#21a121"/><rect x="0" y="3" width="2" height="1" fill="#21a121"/><rect x="3" y="3" width="3" height="1" fill="#21a121"/><rect x="0" y="4" width="5" height="1" fill="#21a121"/><rect x="1" y="5" width="3" height="1" fill="#21a121"/><rect x="2" y="6" width="1" height="1" fill="#21a121"/></svg>
<div class="a" style="left:258px;top:306px;width:13px;height:2px;border-top:1px solid #1c5180;border-left:1px solid #1c5180;border-right:1px solid #1c5180;background:#e0e0dc"></div>
<div class="trkv" style="left:629px;top:203px;height:105px"></div>
<div class="sb" style="left:630px;top:204px"></div>
<svg class="a" style="left:630px;top:204px" width="12" height="10" shape-rendering="crispEdges"><rect x="7" y="4" width="1" height="1" fill="#4d6185"/><rect x="6" y="5" width="3" height="1" fill="#4d6185"/><rect x="5" y="6" width="5" height="1" fill="#4d6185"/><rect x="4" y="7" width="3" height="1" fill="#4d6185"/><rect x="8" y="7" width="3" height="1" fill="#4d6185"/><rect x="3" y="8" width="3" height="1" fill="#4d6185"/><rect x="9" y="8" width="3" height="1" fill="#4d6185"/><rect x="3" y="9" width="2" height="1" fill="#4d6185"/><rect x="10" y="9" width="2" height="1" fill="#4d6185"/></svg>
<div class="thv" style="left:630px;top:221px;height:24px"></div>
<svg class="a" style="left:630px;top:225px" width="11" height="11" shape-rendering="crispEdges"><rect x="4" y="3" width="6" height="1" fill="#f6f9fe"/><rect x="5" y="4" width="6" height="1" fill="#86aaf6"/><rect x="4" y="5" width="6" height="1" fill="#f6f9fe"/><rect x="5" y="6" width="6" height="1" fill="#86aaf6"/><rect x="4" y="7" width="6" height="1" fill="#f6f9fe"/><rect x="5" y="8" width="6" height="1" fill="#86aaf6"/><rect x="4" y="9" width="6" height="1" fill="#f6f9fe"/><rect x="5" y="10" width="6" height="1" fill="#86aaf6"/></svg>
<div class="sb" style="left:630px;top:291px"></div>
<svg class="a" style="left:630px;top:291px" width="12" height="11" shape-rendering="crispEdges"><rect x="3" y="5" width="2" height="1" fill="#4d6185"/><rect x="10" y="5" width="2" height="1" fill="#4d6185"/><rect x="3" y="6" width="3" height="1" fill="#4d6185"/><rect x="9" y="6" width="3" height="1" fill="#4d6185"/><rect x="4" y="7" width="3" height="1" fill="#4d6185"/><rect x="8" y="7" width="3" height="1" fill="#4d6185"/><rect x="5" y="8" width="5" height="1" fill="#4d6185"/><rect x="6" y="9" width="3" height="1" fill="#4d6185"/><rect x="7" y="10" width="1" height="1" fill="#4d6185"/></svg>
<div class="trkh" style="left:18px;top:307px;width:611px"></div>
<div class="sb" style="left:18px;top:308px"></div>
<svg class="a" style="left:18px;top:308px" width="10" height="12" shape-rendering="crispEdges"><rect x="8" y="3" width="2" height="1" fill="#4d6185"/><rect x="7" y="4" width="3" height="1" fill="#4d6185"/><rect x="6" y="5" width="3" height="1" fill="#4d6185"/><rect x="5" y="6" width="3" height="1" fill="#4d6185"/><rect x="4" y="7" width="3" height="1" fill="#4d6185"/><rect x="5" y="8" width="3" height="1" fill="#4d6185"/><rect x="6" y="9" width="3" height="1" fill="#4d6185"/><rect x="7" y="10" width="3" height="1" fill="#4d6185"/><rect x="8" y="11" width="2" height="1" fill="#4d6185"/></svg>
<div class="thh" style="left:35px;top:308px;width:473px"></div>
<svg class="a" style="left:263px;top:308px" width="12" height="11" shape-rendering="crispEdges"><rect x="4" y="4" width="1" height="1" fill="#f6f9fe"/><rect x="6" y="4" width="1" height="1" fill="#f6f9fe"/><rect x="8" y="4" width="1" height="1" fill="#f6f9fe"/><rect x="10" y="4" width="1" height="1" fill="#f6f9fe"/><rect x="4" y="5" width="1" height="1" fill="#f6f9fe"/><rect x="5" y="5" width="1" height="1" fill="#86aaf6"/><rect x="6" y="5" width="1" height="1" fill="#f6f9fe"/><rect x="7" y="5" width="1" height="1" fill="#86aaf6"/><rect x="8" y="5" width="1" height="1" fill="#f6f9fe"/><rect x="9" y="5" width="1" height="1" fill="#86aaf6"/><rect x="10" y="5" width="1" height="1" fill="#f6f9fe"/><rect x="11" y="5" width="1" height="1" fill="#86aaf6"/><rect x="4" y="6" width="1" height="1" fill="#f6f9fe"/><rect x="5" y="6" width="1" height="1" fill="#86aaf6"/><rect x="6" y="6" width="1" height="1" fill="#f6f9fe"/><rect x="7" y="6" width="1" height="1" fill="#86aaf6"/><rect x="8" y="6" width="1" height="1" fill="#f6f9fe"/><rect x="9" y="6" width="1" height="1" fill="#86aaf6"/><rect x="10" y="6" width="1" height="1" fill="#f6f9fe"/><rect x="11" y="6" width="1" height="1" fill="#86aaf6"/><rect x="4" y="7" width="1" height="1" fill="#f6f9fe"/><rect x="5" y="7" width="1" height="1" fill="#86aaf6"/><rect x="6" y="7" width="1" height="1" fill="#f6f9fe"/><rect x="7" y="7" width="1" height="1" fill="#86aaf6"/><rect x="8" y="7" width="1" height="1" fill="#f6f9fe"/><rect x="9" y="7" width="1" height="1" fill="#86aaf6"/><rect x="10" y="7" width="1" height="1" fill="#f6f9fe"/><rect x="11" y="7" width="1" height="1" fill="#86aaf6"/><rect x="4" y="8" width="1" height="1" fill="#f6f9fe"/><rect x="5" y="8" width="1" height="1" fill="#86aaf6"/><rect x="6" y="8" width="1" height="1" fill="#f6f9fe"/><rect x="7" y="8" width="1" height="1" fill="#86aaf6"/><rect x="8" y="8" width="1" height="1" fill="#f6f9fe"/><rect x="9" y="8" width="1" height="1" fill="#86aaf6"/><rect x="10" y="8" width="1" height="1" fill="#f6f9fe"/><rect x="11" y="8" width="1" height="1" fill="#86aaf6"/><rect x="4" y="9" width="1" height="1" fill="#f6f9fe"/><rect x="5" y="9" width="1" height="1" fill="#86aaf6"/><rect x="6" y="9" width="1" height="1" fill="#f6f9fe"/><rect x="7" y="9" width="1" height="1" fill="#86aaf6"/><rect x="8" y="9" width="1" height="1" fill="#f6f9fe"/><rect x="9" y="9" width="1" height="1" fill="#86aaf6"/><rect x="10" y="9" width="1" height="1" fill="#f6f9fe"/><rect x="11" y="9" width="1" height="1" fill="#86aaf6"/><rect x="5" y="10" width="1" height="1" fill="#86aaf6"/><rect x="7" y="10" width="1" height="1" fill="#86aaf6"/><rect x="9" y="10" width="1" height="1" fill="#86aaf6"/><rect x="11" y="10" width="1" height="1" fill="#86aaf6"/></svg>
<div class="sb" style="left:613px;top:308px"></div>
<svg class="a" style="left:613px;top:308px" width="11" height="12" shape-rendering="crispEdges"><rect x="5" y="3" width="2" height="1" fill="#4d6185"/><rect x="5" y="4" width="3" height="1" fill="#4d6185"/><rect x="6" y="5" width="3" height="1" fill="#4d6185"/><rect x="7" y="6" width="3" height="1" fill="#4d6185"/><rect x="8" y="7" width="3" height="1" fill="#4d6185"/><rect x="7" y="8" width="3" height="1" fill="#4d6185"/><rect x="6" y="9" width="3" height="1" fill="#4d6185"/><rect x="5" y="10" width="3" height="1" fill="#4d6185"/><rect x="5" y="11" width="2" height="1" fill="#4d6185"/></svg>
<div class="a" style="left:629px;top:307px;width:17px;height:17px;background:#ece9d8"></div>
<div class="a" style="left:18px;top:324px;width:628px;height:1px;background:#ebe9da"></div>
<div class="a" style="left:18px;top:325px;width:627px;height:1px;background:#fff"></div>
<div class="a" style="left:18px;top:327px;width:628px;height:1px;background:#d4d0c2"></div>
<div class="a" style="left:18px;top:328px;width:628px;height:1px;background:#a09d8e"></div>
<div class="a" style="left:645px;top:326px;width:1px;height:3px;background:#a09d8e"></div>
<div class="a" style="left:18px;top:329px;width:628px;height:88px;background:#fff"></div>
<div class="t" style="left:18px;top:330px;letter-spacing:-0.8px">UPDATE</div>
<div class="t" style="left:69px;top:330px;">Products</div>
<div class="t" style="left:18px;top:343px;letter-spacing:-1.5px">SET</div>
<div class="a" style="left:18px;top:329px;width:628px;height:88px;overflow:hidden">
<div class="t" style="left:60px;top:14px;letter-spacing:-0.1px">ProductName</div>
<div class="t" style="left:127px;top:14px;letter-spacing:-0.1px">=</div>
<div class="t" style="left:138px;top:14px;letter-spacing:-0.1px">@ProductName,</div>
<div class="t" style="left:219px;top:14px;letter-spacing:-0.1px">SupplierID</div>
<div class="t" style="left:271px;top:14px;letter-spacing:-0.1px">=</div>
<div class="t" style="left:282px;top:14px;letter-spacing:-0.1px">@SupplierID,</div>
<div class="t" style="left:348px;top:14px;letter-spacing:-0.1px">CategoryID</div>
<div class="t" style="left:407px;top:14px;letter-spacing:-0.1px">=</div>
<div class="t" style="left:418px;top:14px;letter-spacing:-0.1px">@CategoryID,</div>
<div class="t" style="left:491px;top:14px;letter-spacing:-0.1px">QuantityPerUnit</div>
<div class="t" style="left:571px;top:14px;letter-spacing:-0.1px">=</div>
<div class="t" style="left:582px;top:14px;letter-spacing:-0.1px">@QuantityPerUnit,</div>
<div class="t" style="left:66px;top:27px;letter-spacing:-0.1px">UnitsInStock</div>
<div class="t" style="left:129px;top:27px;letter-spacing:-0.1px">=</div>
<div class="t" style="left:140px;top:27px;letter-spacing:-0.1px">@UnitsInStock,</div>
<div class="t" style="left:217px;top:27px;letter-spacing:-0.1px">UnitsOnOrder</div>
<div class="t" style="left:286px;top:27px;letter-spacing:-0.1px">=</div>
<div class="t" style="left:296px;top:27px;letter-spacing:-0.1px">@UnitsOnOrder,</div>
<div class="t" style="left:379px;top:27px;letter-spacing:-0.1px">ReorderLevel</div>
<div class="t" style="left:447px;top:27px;letter-spacing:-0.1px">=</div>
<div class="t" style="left:458px;top:27px;letter-spacing:-0.1px">@ReorderLevel,</div>
<div class="t" style="left:538px;top:27px;letter-spacing:-0.1px">Discontinued</div>
<div class="t" style="left:603px;top:27px;letter-spacing:-0.1px">=</div>
<div class="t" style="left:614px;top:27px;letter-spacing:-0.1px">@Discontinued</div>
</div>
<div class="t" style="left:19px;top:369px;letter-spacing:-1.2px">WHERE</div>
<div class="t" style="left:69px;top:369px;">(ProductID = @Original_ProductID)</div>
<div class="trkh" style="left:18px;top:417px;width:628px"></div>
<div class="sb" style="left:18px;top:418px"></div>
<svg class="a" style="left:18px;top:418px" width="10" height="12" shape-rendering="crispEdges"><rect x="8" y="3" width="2" height="1" fill="#4d6185"/><rect x="7" y="4" width="3" height="1" fill="#4d6185"/><rect x="6" y="5" width="3" height="1" fill="#4d6185"/><rect x="5" y="6" width="3" height="1" fill="#4d6185"/><rect x="4" y="7" width="3" height="1" fill="#4d6185"/><rect x="5" y="8" width="3" height="1" fill="#4d6185"/><rect x="6" y="9" width="3" height="1" fill="#4d6185"/><rect x="7" y="10" width="3" height="1" fill="#4d6185"/><rect x="8" y="11" width="2" height="1" fill="#4d6185"/></svg>
<div class="thh" style="left:35px;top:418px;width:471px"></div>
<svg class="a" style="left:262px;top:418px" width="12" height="11" shape-rendering="crispEdges"><rect x="4" y="4" width="1" height="1" fill="#f6f9fe"/><rect x="6" y="4" width="1" height="1" fill="#f6f9fe"/><rect x="8" y="4" width="1" height="1" fill="#f6f9fe"/><rect x="10" y="4" width="1" height="1" fill="#f6f9fe"/><rect x="4" y="5" width="1" height="1" fill="#f6f9fe"/><rect x="5" y="5" width="1" height="1" fill="#86aaf6"/><rect x="6" y="5" width="1" height="1" fill="#f6f9fe"/><rect x="7" y="5" width="1" height="1" fill="#86aaf6"/><rect x="8" y="5" width="1" height="1" fill="#f6f9fe"/><rect x="9" y="5" width="1" height="1" fill="#86aaf6"/><rect x="10" y="5" width="1" height="1" fill="#f6f9fe"/><rect x="11" y="5" width="1" height="1" fill="#86aaf6"/><rect x="4" y="6" width="1" height="1" fill="#f6f9fe"/><rect x="5" y="6" width="1" height="1" fill="#86aaf6"/><rect x="6" y="6" width="1" height="1" fill="#f6f9fe"/><rect x="7" y="6" width="1" height="1" fill="#86aaf6"/><rect x="8" y="6" width="1" height="1" fill="#f6f9fe"/><rect x="9" y="6" width="1" height="1" fill="#86aaf6"/><rect x="10" y="6" width="1" height="1" fill="#f6f9fe"/><rect x="11" y="6" width="1" height="1" fill="#86aaf6"/><rect x="4" y="7" width="1" height="1" fill="#f6f9fe"/><rect x="5" y="7" width="1" height="1" fill="#86aaf6"/><rect x="6" y="7" width="1" height="1" fill="#f6f9fe"/><rect x="7" y="7" width="1" height="1" fill="#86aaf6"/><rect x="8" y="7" width="1" height="1" fill="#f6f9fe"/><rect x="9" y="7" width="1" height="1" fill="#86aaf6"/><rect x="10" y="7" width="1" height="1" fill="#f6f9fe"/><rect x="11" y="7" width="1" height="1" fill="#86aaf6"/><rect x="4" y="8" width="1" height="1" fill="#f6f9fe"/><rect x="5" y="8" width="1" height="1" fill="#86aaf6"/><rect x="6" y="8" width="1" height="1" fill="#f6f9fe"/><rect x="7" y="8" width="1" height="1" fill="#86aaf6"/><rect x="8" y="8" width="1" height="1" fill="#f6f9fe"/><rect x="9" y="8" width="1" height="1" fill="#86aaf6"/><rect x="10" y="8" width="1" height="1" fill="#f6f9fe"/><rect x="11" y="8" width="1" height="1" fill="#86aaf6"/><rect x="4" y="9" width="1" height="1" fill="#f6f9fe"/><rect x="5" y="9" width="1" height="1" fill="#86aaf6"/><rect x="6" y="9" width="1" height="1" fill="#f6f9fe"/><rect x="7" y="9" width="1" height="1" fill="#86aaf6"/><rect x="8" y="9" width="1" height="1" fill="#f6f9fe"/><rect x="9" y="9" width="1" height="1" fill="#86aaf6"/><rect x="10" y="9" width="1" height="1" fill="#f6f9fe"/><rect x="11" y="9" width="1" height="1" fill="#86aaf6"/><rect x="5" y="10" width="1" height="1" fill="#86aaf6"/><rect x="7" y="10" width="1" height="1" fill="#86aaf6"/><rect x="9" y="10" width="1" height="1" fill="#86aaf6"/><rect x="11" y="10" width="1" height="1" fill="#86aaf6"/></svg>
<div class="sb" style="left:630px;top:418px"></div>
<svg class="a" style="left:630px;top:418px" width="11" height="12" shape-rendering="crispEdges"><rect x="5" y="3" width="2" height="1" fill="#4d6185"/><rect x="5" y="4" width="3" height="1" fill="#4d6185"/><rect x="6" y="5" width="3" height="1" fill="#4d6185"/><rect x="7" y="6" width="3" height="1" fill="#4d6185"/><rect x="8" y="7" width="3" height="1" fill="#4d6185"/><rect x="7" y="8" width="3" height="1" fill="#4d6185"/><rect x="6" y="9" width="3" height="1" fill="#4d6185"/><rect x="5" y="10" width="3" height="1" fill="#4d6185"/><rect x="5" y="11" width="2" height="1" fill="#4d6185"/></svg>
<div class="a" style="left:18px;top:434px;width:628px;height:1px;background:#ebe9da"></div>
<div class="a" style="left:18px;top:435px;width:627px;height:1px;background:#fff"></div>
<div class="a" style="left:18px;top:437px;width:628px;height:1px;background:#d4d0c2"></div>
<div class="a" style="left:18px;top:438px;width:628px;height:1px;background:#a09d8e"></div>
<div class="a" style="left:645px;top:436px;width:1px;height:3px;background:#a09d8e"></div>
<div class="a" style="left:18px;top:439px;width:628px;height:1px;background:#a8a595"></div>
<div class="a" style="left:18px;top:440px;width:628px;height:1px;background:#fdfcf7"></div>
<div class="a" style="left:18px;top:441px;width:628px;height:7px;background:#ebeadb"></div>
<div class="a" style="left:58px;top:440px;width:1px;height:8px;background:#a9a696"></div>
<div class="hsep" style="left:157px;top:444px;height:4px"></div>
<div class="hsep" style="left:257px;top:444px;height:4px"></div>
<div class="hsep" style="left:357px;top:444px;height:4px"></div>
<div class="hsep" style="left:457px;top:444px;height:4px"></div>
<div class="hsep" style="left:557px;top:444px;height:4px"></div>
<div class="a" style="left:18px;top:448px;width:627px;height:26px;background:linear-gradient(180deg,#fbfaf6 0%,#f6f5ef 50%,#ebe9dc 100%)"></div>
<svg class="a" style="left:18px;top:448px" width="627" height="26">
<defs><linearGradient id="g" x1="0" y1="0" x2="1" y2="0"><stop offset="0" stop-color="#a0a0a0"/><stop offset="1" stop-color="#d0d0d0"/></linearGradient></defs>
<rect x="5" y="6" width="3" height="12" fill="#b4b4b4"/>
<path d="M15 6v12l-7-6z" fill="url(#g)"/>
<path d="M37 6v12l-6-6z" fill="url(#g)"/>
<path d="M143 6v12l6-6z" fill="url(#g)"/>
<path d="M165 6v12l6-6z" fill="url(#g)"/>
<rect x="172" y="6" width="3" height="12" fill="#b4b4b4"/>
<path d="M185 6v12l6-6z" fill="url(#g)"/>
<rect x="193" y="8" width="7" height="7" fill="#d9d9d9"/><path d="M193 10.5h7M193 12.5h7M195.5 8v7M197.5 8v7" stroke="#ececec"/>
<circle cx="222" cy="11.8" r="7.5" fill="#e8e8e4" stroke="#b0b0b0" stroke-width="1.2"/>
<rect x="219" y="9" width="6" height="6" fill="#a8a8a8"/>
</svg>
<div class="tsep" style="left:67px;top:453px"></div>
<div class="tsep" style="left:151px;top:453px"></div>
<div class="tsep" style="left:226px;top:453px"></div>
<div class="tsep" style="left:256px;top:453px"></div>
<div class="tsep" style="left:590px;top:453px"></div>
<div class="tsep" style="left:642px;top:453px"></div>
<div class="a" style="left:71px;top:450px;width:50px;height:21px;background:#ece9d8;border:1px solid #aca899"></div>
<div class="t" style="left:74px;top:454px;color:#a5a291">0</div>
<div class="t" style="left:124px;top:454px;color:#a5a291">of 0</div>
<div class="a" style="left:645px;top:450px;width:1px;height:21px;background:#b5b2a2"></div>
<div class="btn" style="left:17px;top:511px;width:91px;padding-right:1px"><span style="text-decoration:underline">E</span>xecute Query</div>
<div class="btn" style="left:493px;top:511px;width:73px;box-shadow:inset 1px 1px 0 #cee7ff,inset -1px -1px 0 #6696eb,inset 2px 2px 0 #bcd4f6,inset -2px -2px 0 #89ade4"><span style="text-decoration:underline">O</span>K</div>
<div class="btn" style="left:574px;top:511px;width:73px"><span style="text-decoration:underline">C</span>ancel</div>
<svg class="a" style="left:648px;top:533px" width="12" height="12"><g fill="#fff"><rect x="10" y="2" width="2" height="2"/><rect x="6" y="6" width="2" height="2"/><rect x="10" y="6" width="2" height="2"/><rect x="2" y="10" width="2" height="2"/><rect x="6" y="10" width="2" height="2"/><rect x="10" y="10" width="2" height="2"/></g><g fill="#b9b5a4"><rect x="9" y="1" width="2" height="2"/><rect x="5" y="5" width="2" height="2"/><rect x="9" y="5" width="2" height="2"/><rect x="1" y="9" width="2" height="2"/><rect x="5" y="9" width="2" height="2"/><rect x="9" y="9" width="2" height="2"/></g></svg>
</body></html>
